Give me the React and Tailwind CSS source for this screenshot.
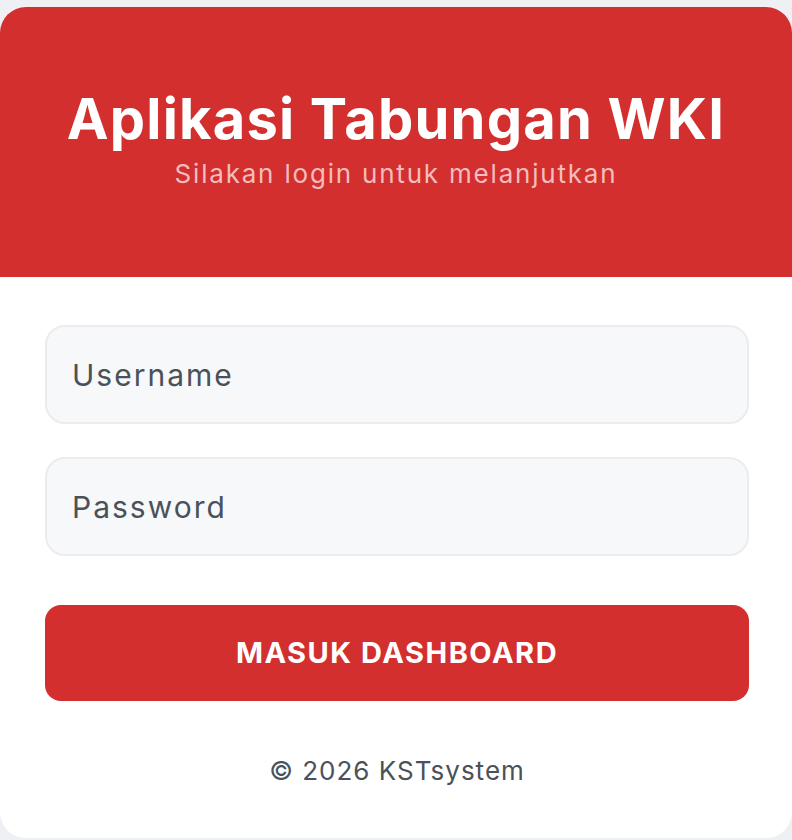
export default function App() {
  return (
    <div className="min-h-[840px] bg-[#eef0f4] pt-[7px]" style={{ fontFamily: 'Inter, "Noto Sans", sans-serif' }}>
      <div className="w-full h-[831px] bg-white rounded-[26px] overflow-hidden flex flex-col">
        <div className="h-[270px] bg-[#d32f2f] flex flex-col items-center pt-[80px]">
          <h1 className="text-[56px] leading-[64px] font-bold tracking-[1.2px] text-white">Aplikasi Tabungan WKI</h1>
          <p className="text-[26px] leading-[30px] tracking-[1.8px] text-[#f4bcbc] mt-[8px]">Silakan login untuk melanjutkan</p>
        </div>
        <div className="pl-[45px] pr-[43px] pt-[48px] flex flex-col">
          <input
            type="text"
            placeholder="Username"
            className="h-[99px] rounded-[20px] border-2 border-[#ececee] bg-[#f7f8fa] px-[25px] text-[30px] tracking-[2px] text-[#4b5158] placeholder:text-[#4b5158] outline-none"
          />
          <input
            type="password"
            placeholder="Password"
            className="mt-[33px] h-[99px] rounded-[20px] border-2 border-[#ececee] bg-[#f7f8fa] px-[25px] text-[30px] tracking-[2px] text-[#4b5158] placeholder:text-[#4b5158] outline-none"
          />
          <button className="mt-[49px] h-[96px] rounded-[16px] bg-[#d32f2f] text-white text-[29px] font-bold tracking-[1.5px]">
            MASUK DASHBOARD
          </button>
          <p className="mt-[52px] text-center text-[26px] leading-[36px] tracking-[1px] text-[#4b5158]">© 2026 KSTsystem</p>
        </div>
      </div>
    </div>
  );
}
